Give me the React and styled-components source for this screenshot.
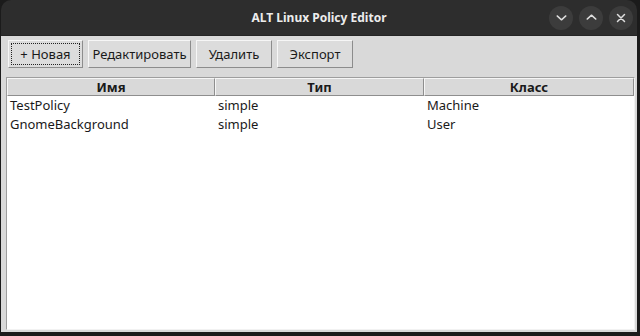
import React from 'react'
import styled, { createGlobalStyle } from 'styled-components';

const Global = createGlobalStyle`
  html, body {
    margin: 0;
    padding: 0;
    background: #1b1b1b;
    font-family: "Noto Sans", "DejaVu Sans", sans-serif;
  }
`;

const Window = styled.div`
  width: 636px;
  height: 332px;
  margin-left: 1px;
  display: flex;
  flex-direction: column;
  border-radius: 10px 10px 0 0;
  overflow: hidden;
`;

const TitleBar = styled.div`
  height: 35px;
  flex: none;
  background: #2d2d2d;
  display: grid;
  grid-template-columns: 1fr auto 1fr;
  align-items: center;
  border-bottom: 1px solid #242424;
`;

const Title = styled.div`
  grid-column: 2;
  color: #ececec;
  font-size: 12px;
  font-weight: bold;
`;

const Controls = styled.div`
  justify-self: end;
  display: flex;
  gap: 6px;
  padding-right: 4px;
`;

const CtlButton = styled.div`
  width: 24px;
  height: 24px;
  border-radius: 50%;
  background: #3c3c3c;
  display: flex;
  align-items: center;
  justify-content: center;
  color: #dedede;
`;

const Body = styled.div`
  flex: 1;
  background: #d9d9d9;
  display: flex;
  flex-direction: column;
  padding: 4px 2px 2px 5px;
  min-height: 0;
`;

const Toolbar = styled.div`
  display: flex;
  gap: 5px;
  margin-left: 2px;
  margin-bottom: 9px;
`;

const Button = styled.button`
  height: 28px;
  width: ${p => p.$w}px;
  padding: 0;
  background: #dcdcdc;
  border: 1px solid;
  border-color: #f6f6f6 #8c8c8c #8c8c8c #f6f6f6;
  font-family: "Noto Sans", "DejaVu Sans", sans-serif;
  font-size: 13px;
  color: #1a1a1a;
  outline: ${p => (p.$focus ? '1px dotted #222' : 'none')};
  outline-offset: -4px;
`;

const Table = styled.div`
  flex: 1;
  background: #ffffff;
  border: 1px solid;
  border-color: #9e9e9e #f2f2f2 #f2f2f2 #9e9e9e;
  display: flex;
  flex-direction: column;
  min-height: 0;
`;

const Grid = styled.div`
  display: grid;
  grid-template-columns: 208px 209px 1fr;
`;

const HeadCell = styled.div`
  height: 16px;
  background: #d9d9d9;
  border: 1px solid;
  border-color: #f6f6f6 #8e8e8e #8e8e8e #f6f6f6;
  font-size: 13px;
  font-weight: bold;
  color: #1a1a1a;
  text-align: center;
  line-height: 16px;
`;

const Cell = styled.div`
  height: 19px;
  line-height: 19px;
  padding-left: 3px;
  font-size: 13px;
  color: #1a1a1a;
  white-space: nowrap;
`;

const rows = [
  ['TestPolicy', 'simple', 'Machine'],
  ['GnomeBackground', 'simple', 'User'],
];

const Chevron = ({ up }) => (
  <svg width="13" height="13" viewBox="0 0 12 12" fill="none" stroke="currentColor" strokeWidth="1.3" strokeLinecap="round" strokeLinejoin="round">
    <path d={up ? 'M2 7.5 L6 3.8 L10 7.5' : 'M2 4.5 L6 8.2 L10 4.5'} />
  </svg>
);

const Close = () => (
  <svg width="12" height="12" viewBox="0 0 12 12" fill="none" stroke="currentColor" strokeWidth="1.5" strokeLinecap="round">
    <path d="M2.5 2.5 L9.5 9.5 M9.5 2.5 L2.5 9.5" />
  </svg>
);

const App = () => {
  return (
    <>
      <Global />
      <Window>
        <TitleBar>
          <Title>ALT Linux Policy Editor</Title>
          <Controls>
            <CtlButton><Chevron /></CtlButton>
            <CtlButton><Chevron up /></CtlButton>
            <CtlButton><Close /></CtlButton>
          </Controls>
        </TitleBar>
        <Body>
          <Toolbar>
            <Button $w={75} $focus>+ Новая</Button>
            <Button $w={103}>Редактировать</Button>
            <Button $w={76}>Удалить</Button>
            <Button $w={76}>Экспорт</Button>
          </Toolbar>
          <Table>
            <Grid>
              <HeadCell>Имя</HeadCell>
              <HeadCell>Тип</HeadCell>
              <HeadCell>Класс</HeadCell>
            </Grid>
            {rows.map(r => (
              <Grid key={r[0]}>
                {r.map(v => <Cell key={v}>{v}</Cell>)}
              </Grid>
            ))}
          </Table>
        </Body>
      </Window>
    </>
  );
};

export default App
